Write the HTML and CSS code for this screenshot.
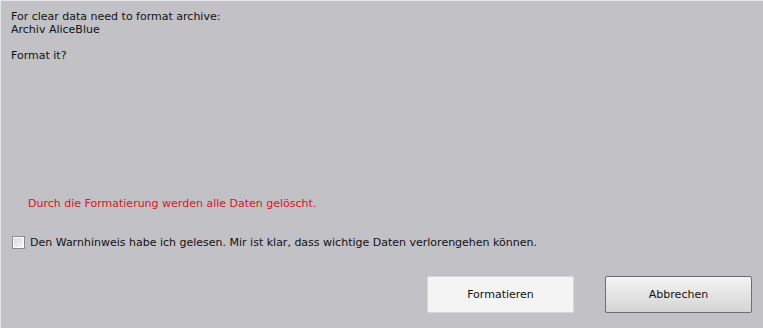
FILE: index.html
```html
<!DOCTYPE html>
<html lang="de">
<head>
  <meta charset="UTF-8">
  <title>Archiv formatieren</title>
  <link rel="stylesheet" href="styles.css">
</head>
<body>
  <div class="dialog">
    <div class="message">
      <p>For clear data need to format archive:<br>Archiv AliceBlue</p>
      <p>Format it?</p>
    </div>
    <p class="warning">Durch die Formatierung werden alle Daten gelöscht.</p>
    <label class="confirm">
      <span class="box"></span>
      <span>Den Warnhinweis habe ich gelesen. Mir ist klar, dass wichtige Daten verlorengehen können.</span>
    </label>
    <div class="buttons">
      <button class="btn btn-light">Formatieren</button>
      <button class="btn btn-default">Abbrechen</button>
    </div>
  </div>
</body>
</html>
```

FILE: styles.css
```css
html, body {
  margin: 0;
  padding: 0;
  width: 763px;
  height: 328px;
  overflow: hidden;
}
body {
  font-family: "DejaVu Sans", Verdana, sans-serif;
  font-size: 11px;
  color: #111;
  background: #c2c1c6;
}
.dialog {
  box-sizing: border-box;
  height: 328px;
  border-top: 1px solid #e6e6ea;
  border-left: 1px solid #e6e6ea;
  padding: 9px 0 0 10px;
  display: flex;
  flex-direction: column;
}
.message p {
  margin: 0 0 13px 0;
  line-height: 13px;
}
.warning {
  margin: 122px 0 0 17px;
  color: #e0101e;
  line-height: 13px;
}
.confirm {
  display: flex;
  align-items: center;
  gap: 5px;
  margin: 26px 0 0 1px;
  line-height: 13px;
}
.box {
  width: 11px;
  height: 11px;
  border: 1px solid #8a8a8e;
  background: linear-gradient(135deg, #d8d8dc, #f6f6f8);
  box-shadow: inset 0 0 0 1px #fff;
}
.buttons {
  display: flex;
  justify-content: flex-end;
  gap: 31px;
  margin-top: 27px;
  padding-right: 11px;
}
.btn {
  width: 147px;
  height: 37px;
  font-family: inherit;
  font-size: 11px;
  color: #111;
  border-radius: 2px;
  cursor: pointer;
}
.btn-light {
  background: #f4f4f5;
  border: 1px solid #d8d8dc;
}
.btn-default {
  background: linear-gradient(#f4f4f4, #e4e4e4 50%, #d4d4d6);
  border: 1px solid #6e6e72;
}
```
